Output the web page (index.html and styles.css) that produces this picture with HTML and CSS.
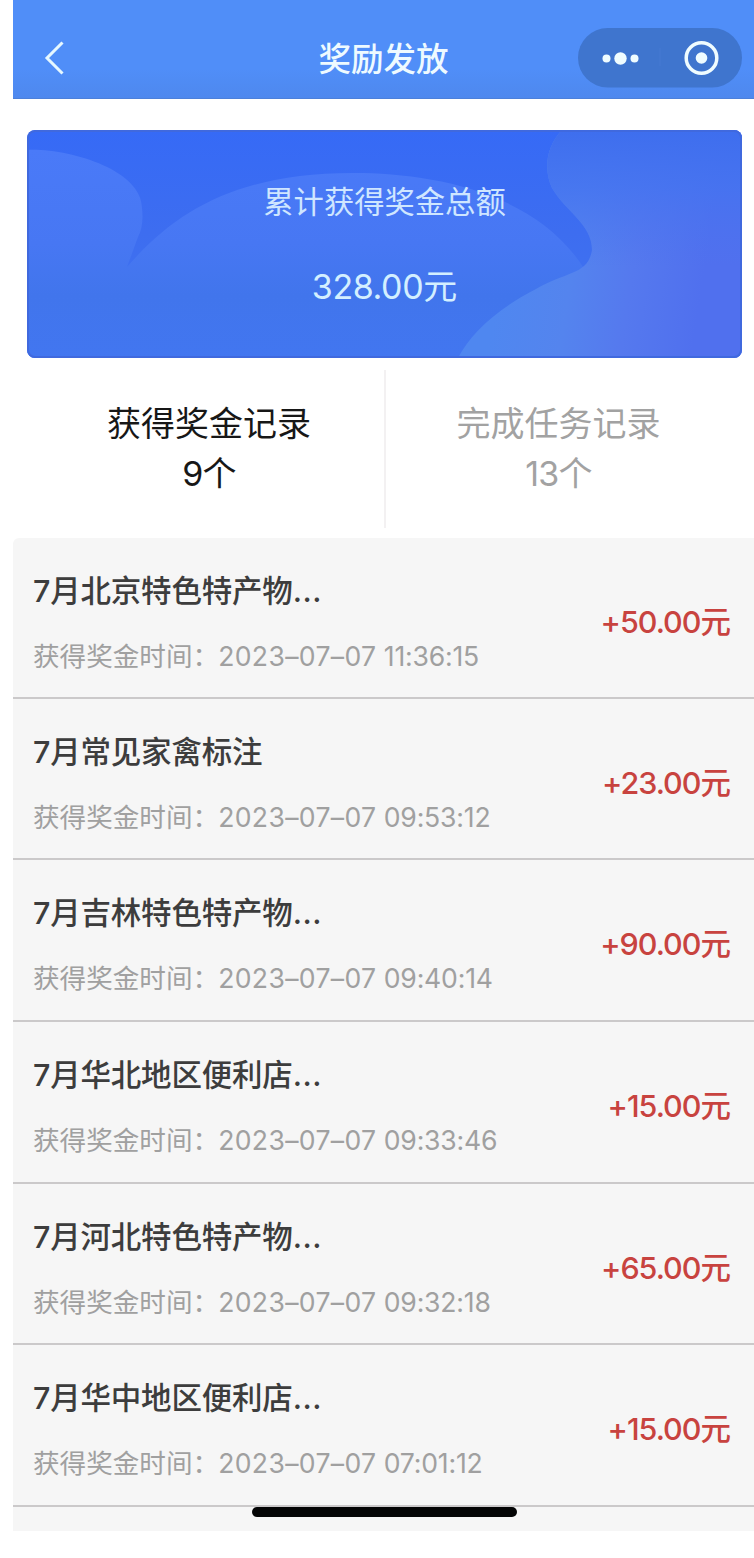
FILE: index.html
```html
<!DOCTYPE html>
<html lang="zh-CN">
<head>
<meta charset="utf-8">
<title>奖励发放</title>
<link rel="stylesheet" href="styles.css">
</head>
<body>
<div class="phone">
  <header class="navbar">
    <svg class="back" width="24" height="36" viewBox="0 0 24 36"><path d="M20.500 2.500 5 18l15.500 15.500" fill="none" stroke="#e6f8ff" stroke-width="3"/></svg>
    <h1 class="navbar-title">奖励发放</h1>
    <svg class="capsule" width="164" height="60" viewBox="0 0 164 60">
      <rect width="164" height="59.500" rx="29.700" fill="#3f75ce"/>
      <path d="M82 20v18" stroke="#4479d0" stroke-width="1.500"/>
      <g fill="#effcff"><circle cx="28.500" cy="30.500" r="4"/><circle cx="42.500" cy="30.500" r="6.200"/><circle cx="56.500" cy="30.500" r="4"/><circle cx="123.500" cy="30" r="5.800"/></g>
      <circle cx="123.500" cy="30" r="15.300" fill="none" stroke="#effcff" stroke-width="3.500"/>
    </svg>
  </header>
  <section class="card">
    <svg class="card-art" width="715" height="228" viewBox="0 0 715 228">
      <defs>
        <linearGradient id="base" x2="0" y2="1"><stop stop-color="#366af6"/><stop offset=".45" stop-color="#3d6df0"/><stop offset="1" stop-color="#4276f0"/></linearGradient>
        <linearGradient id="hill" gradientUnits="userSpaceOnUse" x1="0" y1="20" x2="0" y2="228"><stop stop-color="#4a7af8"/><stop offset=".45" stop-color="#4777f3"/><stop offset=".7" stop-color="#4175ec"/><stop offset="1" stop-color="#4276f0"/></linearGradient>
        <linearGradient id="right" gradientUnits="userSpaceOnUse" x1="470" y1="160" x2="670" y2="190"><stop stop-color="#4f87f0"/><stop offset=".35" stop-color="#5484ee"/><stop offset=".65" stop-color="#5579ee"/><stop offset="1" stop-color="#5070ee"/></linearGradient>
        <linearGradient id="shade" x2="0" y2="1"><stop stop-color="#3e6eee"/><stop offset=".25" stop-color="#4473f0" stop-opacity=".8"/><stop offset=".6" stop-color="#4b73f0" stop-opacity="0"/></linearGradient>
      </defs>
      <rect width="715" height="228" fill="url(#base)"/>
      <path d="M0 20C42 18 115 40 115 78Q117 96 111 107L100 137C151 78 215 43 326 43 405 43 510 62 558 140L440 228H0Z" fill="url(#hill)"/>
      <path d="M535 0C518 18 517 41 525 58 539 82 565 94 565 120 561 145 540 141 509 159 470 179 444 203 431 228H715V0Z" fill="url(#right)"/>
      <path d="M535 0C518 18 517 41 525 58 539 82 565 94 565 120 561 145 540 141 509 159 470 179 444 203 431 228H715V0Z" fill="url(#shade)"/>
      <rect x="1" y="1" width="713" height="226" rx="7" fill="none" stroke="#4069de" stroke-width="2"/>
    </svg>
    <div class="card-label">累计获得奖金总额</div>
    <div class="card-total">328.00<span class="unit">元</span></div>
  </section>
  <nav class="tabs">
    <div class="tab active"><div>获得奖金记录</div><div class="count">9个</div></div>
    <div class="tab"><div>完成任务记录</div><div class="count">13个</div></div>
  </nav>
  <main class="list">
    <article class="row"><div class="info"><h2>7月北京特色特产物<span class="dots">...</span></h2><p><span class="label">获得奖金时间：</span><time><span class="date">2023–07–07</span> 11:36:15</time></p></div><div class="amount">+50.00<span class="unit">元</span></div></article>
    <article class="row"><div class="info"><h2>7月常见家禽标注</h2><p><span class="label">获得奖金时间：</span><time><span class="date">2023–07–07</span> 09:53:12</time></p></div><div class="amount">+23.00<span class="unit">元</span></div></article>
    <article class="row"><div class="info"><h2>7月吉林特色特产物<span class="dots">...</span></h2><p><span class="label">获得奖金时间：</span><time><span class="date">2023–07–07</span> 09:40:14</time></p></div><div class="amount">+90.00<span class="unit">元</span></div></article>
    <article class="row"><div class="info"><h2>7月华北地区便利店<span class="dots">...</span></h2><p><span class="label">获得奖金时间：</span><time><span class="date">2023–07–07</span> 09:33:46</time></p></div><div class="amount">+15.00<span class="unit">元</span></div></article>
    <article class="row"><div class="info"><h2>7月河北特色特产物<span class="dots">...</span></h2><p><span class="label">获得奖金时间：</span><time><span class="date">2023–07–07</span> 09:32:18</time></p></div><div class="amount">+65.00<span class="unit">元</span></div></article>
    <article class="row"><div class="info"><h2>7月华中地区便利店<span class="dots">...</span></h2><p><span class="label">获得奖金时间：</span><time><span class="date">2023–07–07</span> 07:01:12</time></p></div><div class="amount">+15.00<span class="unit">元</span></div></article>
    <div class="home-indicator"></div>
  </main>
</div>
</body>
</html>
```
FILE: styles.css
```css
* { box-sizing: border-box; }
body { margin: 0; background: #fff; font-family: Inter, "Noto Sans CJK SC", sans-serif; }
h1, h2, p { margin: 0; }
.phone { height: 1558px; padding-left: 13px; overflow: hidden; }
.navbar { height: 99px; display: grid; grid-template-columns: 1fr auto 1fr; align-items: center; padding: 17px 12px 0 29px; background: linear-gradient(#508ef8 70%, #4e88ee); border-bottom: 1px solid #4c80da; }
.navbar-title { margin-right: 17px; padding-top: 4px; font-size: 32.500px; font-weight: 500; line-height: 48px; color: #eefaff; }
.capsule { justify-self: end; }
.card { position: relative; width: 715px; height: 228px; margin: 31px 0 0 14px; padding-top: 50px; border-radius: 8px; overflow: hidden; text-align: center; color: #cfe6ff; }
.card-art { position: absolute; inset: 0; }
.card-label, .card-total { position: relative; }
.card-label { font-size: 30.300px; line-height: 44px; }
.card-total { margin-top: 39px; font-size: 34px; line-height: 48px; letter-spacing: -.4px; color: #d3efff; }
.tabs { display: grid; grid-template-columns: 373px 368px; height: 180px; padding: 12px 0 10px; }
.tab { padding: 29px 23px 0 0; text-align: center; font-size: 34px; line-height: 50px; color: #a2a2a2; }
.tab.active { padding: 29px 0 0 21px; border-right: 2px solid #f3f1f2; color: #171717; }
.count { letter-spacing: -.8px; }
.list { position: relative; height: 993px; background: #f6f6f6; border-radius: 6px 0 0 0; }
.row { display: flex; justify-content: space-between; align-items: center; height: 161.600px; padding: 8.500px 23px 0 20px; border-bottom: 2px solid #cbc9ca; }
.row:first-child { height: 160.800px; }
.info h2 { font-size: 30.500px; font-weight: 500; line-height: 44px; letter-spacing: -.2px; color: #3d3d3d; }
.dots { letter-spacing: .6px; }
.info p { margin-top: 24px; display: flex; font-size: 26.600px; line-height: 38px; color: #a0a0a0; white-space: pre; }
.info time { margin-left: -1px; letter-spacing: -.2px; }
.date { letter-spacing: .35px; }
.amount { font-size: 30.500px; font-weight: 500; line-height: 44px; letter-spacing: -1px; color: #c8433f; }
.unit { letter-spacing: 0; }
.home-indicator { position: absolute; left: 239px; top: 969px; width: 265px; height: 10px; border-radius: 5px; background: #040505; }
```
